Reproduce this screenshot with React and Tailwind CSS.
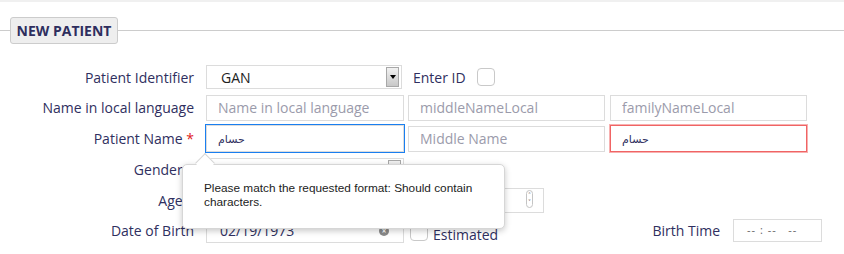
import { useState } from "react";

const label = "w-[194px] shrink-0 text-right text-[14px] text-[#2f2f60]";
const box =
  "h-[26px] border border-[#dcdcdc] bg-white px-[11px] text-[14px] text-[#2f2f60] placeholder:text-[#9b9bab] outline-none";

function SelectBox({ value, className }) {
  return (
    <div className={"relative flex items-center border border-[#dcdcdc] bg-white " + className}>
      <span className="pl-[14px] text-[14px] text-[#222]">{value}</span>
      <div className="absolute right-[2px] top-[1px] bottom-[1px] w-[13px] border border-[#a8a8a8] bg-gradient-to-b from-[#f2f2f2] to-[#c8c8c8] flex items-center justify-center">
        <div className="w-0 h-0 border-l-[3px] border-r-[3px] border-t-[4px] border-l-transparent border-r-transparent border-t-black" />
      </div>
    </div>
  );
}

function Check({ className }) {
  return (
    <div className={"rounded-[4px] border border-[#c9c9c9] bg-white " + className} />
  );
}

export default function App() {
  const [first, setFirst] = useState("حسام");
  const [family, setFamily] = useState("حسام");

  return (
    <div
      className="relative h-[254px] w-[844px] overflow-hidden bg-white border-t-2 border-[#f0f0f0]"
      style={{ fontFamily: '"Open Sans", "DejaVu Sans", sans-serif' }}
    >
      {/* legend */}
      <div className="flex items-center pt-[15px]">
        <div className="w-[10px] h-px bg-[#cccccc]" />
        <div className="h-[27px] w-[108px] rounded-[3px] border border-[#cccccc] bg-[#eeeeee] flex items-center justify-center text-[14px] font-bold text-[#2e2e5e]">
          NEW PATIENT
        </div>
        <div className="flex-1 h-px bg-[#cccccc]" />
      </div>

      <div className="mt-[18px] flex flex-col">
        {/* Patient Identifier */}
        <div className="flex items-center h-[30px] gap-[12px]">
          <div className={label}>Patient Identifier</div>
          <SelectBox value="GAN" className="w-[196px] h-[24px]" />
          <span className="ml-[-1px] text-[14px] text-[#2f2f60]">Enter ID</span>
          <Check className="ml-[-1px] w-[18px] h-[18px]" />
        </div>

        {/* Name in local language */}
        <div className="flex items-center h-[31px]">
          <div className={label}>Name in local language</div>
          <input className={box + " ml-[12px] w-[198px]"} placeholder="Name in local language" />
          <input className={box + " ml-[4px] w-[197px]"} placeholder="middleNameLocal" />
          <input className={box + " ml-[5px] w-[197px]"} placeholder="familyNameLocal" />
        </div>

        {/* Patient Name */}
        <div className="flex items-center h-[31px]">
          <div className={label}>
            Patient Name <span className="text-[#e02020]">*</span>
          </div>
          <input
            className={box + " ml-[12px] w-[198px] h-[27px] !text-[11px] border-[#1a7ff0] ring-1 ring-[#1a7ff0] bg-[#fdfcf7]"}
            value={first}
            onChange={(e) => setFirst(e.target.value)}
          />
          <input className={box + " ml-[4px] w-[197px]"} placeholder="Middle Name" />
          <input
            className={box + " ml-[5px] w-[197px] h-[27px] !text-[11px] border-[#f06464] ring-1 ring-[#f8b0b0]"}
            value={family}
            onChange={(e) => setFamily(e.target.value)}
          />
        </div>

        {/* Gender */}
        <div className="flex items-center h-[31px] gap-[12px]">
          <div className={label}>
            Gender <span className="text-[#e02020]">*</span>
          </div>
          <SelectBox value="" className="w-[198px] h-[24px]" />
        </div>

        {/* Age */}
        <div className="flex items-center h-[30px]">
          <div className={label}>
            Age <span className="text-[#e02020]">*</span>
          </div>
          <input className={box + " ml-[12px] w-[198px] h-[25px]"} />
          <div className="relative ml-[4px] w-[136px] h-[25px] border border-[#dcdcdc] bg-white">
            <div className="absolute right-[10px] top-[1px] w-[7px] h-[18px] rounded-full border border-[#c4c4c4] flex flex-col items-center justify-center text-[6px] leading-[7px] text-[#555]">
              <span>˄</span>
              <span>˅</span>
            </div>
          </div>
        </div>

        {/* Date of Birth */}
        <div className="flex items-center h-[31px]">
          <div className={label}>Date of Birth</div>
          <div className="relative ml-[12px] w-[198px] h-[24px] border border-[#dcdcdc] bg-white flex items-center pl-[13px] text-[14px] text-[#2f2f60]">
            02/19/1973
            <div className="absolute right-[14px] top-[6px] w-[10px] h-[10px] rounded-full bg-[#8a8a8a] flex items-center justify-center text-white text-[8px] leading-none font-bold">
              ×
            </div>
          </div>
          <Check className="ml-[6px] w-[18px] h-[20px]" />
          <span className="ml-[5px] text-[14px] text-[#2f2f60] mt-[8px]">Estimated</span>
          <div className="ml-auto mr-[22px] flex items-center gap-[13px]">
            <span className="text-[14px] text-[#2f2f60]">Birth Time</span>
            <div className="w-[89px] h-[23px] border border-[#dcdcdc] bg-white flex items-center pl-[13px] text-[11px] text-[#666] tracking-[1px]">
              -- : --&nbsp;&nbsp; --
            </div>
          </div>
        </div>
      </div>

      {/* validation tooltip */}
      <div className="absolute left-[182px] top-[162px] w-[323px] h-[65px] rounded-[5px] border border-[#d6d6d6] bg-white shadow-[0_2px_6px_rgba(0,0,0,0.22)]">
        <div className="absolute left-[15px] top-[-9px] w-[14px] h-[14px] rotate-45 border-l border-t border-[#d6d6d6] bg-white" />
        <div
          className="relative pt-[16px] pl-[21px] pr-[20px] text-[11.8px] leading-[14px] text-[#222]"
          style={{ fontFamily: '"Liberation Sans", Arial, sans-serif' }}
        >
          Please match the requested format: Should contain characters.
        </div>
      </div>
    </div>
  );
}
